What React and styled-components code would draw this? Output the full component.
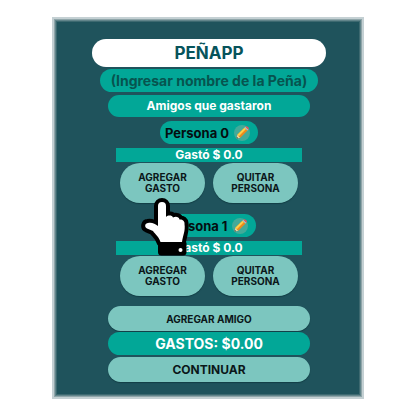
import React, { useState } from "react";
import styled, { createGlobalStyle } from "styled-components";

const GlobalStyle = createGlobalStyle`
  * { box-sizing: border-box; }
  body {
    margin: 0;
    background: #fff;
    font-family: Inter, "Liberation Sans", sans-serif;
    font-weight: 700;
  }
  button, input { font: inherit; }
`;

const Frame = styled.main`
  display: flex;
  flex-direction: column;
  margin: 17px 52px;
  padding: 18px 36px 14px 38px;
  background: #1f535c;
  border: 2px solid #c4d0d3;
  box-shadow: inset 0 0 0 1px #8fa5a9, inset 0 0 0 2px #62858b, inset 0 0 0 3px #3d6970;
`;

const Title = styled.h1`
  margin: 2px 0;
  border-radius: 14px;
  background: #fff;
  color: #07545b;
  font-size: 17px;
  line-height: 28px;
  text-align: center;
`;

const NameInput = styled.input`
  height: 23px;
  margin: 0 8px 3px;
  padding: 0 4px;
  min-width: 0;
  border: 0;
  border-radius: 12px;
  background: #02a797;
  color: #07484a;
  font-size: 14px;
  text-align: center;
  &::placeholder { color: #07544f; opacity: 1; }
`;

const Heading = styled.h2`
  margin: 0 16px 4px;
  border-radius: 12px;
  background: #02a797;
  color: #fff;
  font-size: 12px;
  line-height: 22px;
  text-align: center;
`;

const Person = styled.section`
  display: flex;
  flex-direction: column;
  margin: 0 24px 11px;
  &:last-of-type { margin-bottom: 10px; }
`;

const PersonName = styled.h3`
  display: flex;
  align-items: center;
  align-self: center;
  gap: 5px;
  height: 23px;
  margin: 0 0 4px;
  padding: 0 8px 0 5px;
  border-radius: 12px;
  background: #02a797;
  color: #050e10;
  font-size: 13px;
`;

const EditButton = styled.button`
  display: flex;
  align-items: center;
  justify-content: center;
  width: 16px;
  height: 16px;
  padding: 0;
  border: 0;
  border-radius: 50%;
  background: #43aa99;
  cursor: pointer;
`;

const Spent = styled.p`
  margin: 0 0 1px;
  background: #02a797;
  color: #fff;
  font-size: 12px;
  line-height: 14px;
  text-align: center;
`;

const Actions = styled.div`
  display: grid;
  grid-template-columns: 1fr 1fr;
  gap: 8px;
  padding: 0 4px;
`;

const Action = styled.div`
  position: relative;
  display: grid;
`;

const Pill = styled.button`
  padding: 0 12px;
  border: 0;
  border-radius: 20px;
  background: #7cc6bf;
  box-shadow: 0 1px 1px #123f46;
  color: #0b1719;
  cursor: pointer;
`;

const ActionButton = styled(Pill)`
  height: 40px;
  padding: 0 8px;
  font-size: 10px;
  line-height: 11px;
`;

const WideButton = styled(Pill)`
  height: 25px;
  margin: 0 16px 1px;
  font-size: ${(p) => (p.$large ? "12px" : "10px")};
`;

const Total = styled.output`
  margin: 0 16px 2px;
  border-radius: 12px;
  background: #02a797;
  color: #fff;
  font-size: 14px;
  line-height: 23px;
  text-align: center;
`;

const Pointer = styled.svg`
  position: absolute;
  z-index: 1;
  top: 35px;
  left: 21px;
  width: 48px;
  height: 58px;
  pointer-events: none;
`;

function Pencil() {
  return (
    <svg viewBox="0 0 12 12" width="13" height="13" aria-hidden="true">
      <path d="M0.5 11.5 1.2 8.1 4 10.8Z" fill="#f5d3a0" />
      <path d="M0.5 11.5 0.8 10 2 11.2Z" fill="#27363a" />
      <path d="M1.2 8.1 7.8 1.5 10.6 4.2 4 10.8Z" fill="#ee8a1c" />
      <path d="M1.2 8.1 7.8 1.5 9.2 2.8 2.6 9.5Z" fill="#ffd04a" />
      <path d="M7.8 1.500 8.600 .7 11.400 3.400 10.600 4.200Z" fill="#b9c4c6" />
      <path d="M8.600 .7Q9.700 -.3 11.100 1T11.400 3.400Z" fill="#e0565d" />
    </svg>
  );
}

function HandPointer() {
  return (
    <Pointer viewBox="0 0 48 58" aria-hidden="true">
      <path
        d="M17 8a4 4 0 0 1 8 0V19C27 17 31 17 32 19.5 35 18 38 19 38.5 21.5 41 21 44 23 43.5 26 44.5 33 42 37 41 44H19.500C18 39 14 36 12 33L6 30.500C3 29 4 25 7 25 11 24 14 26 17 28Z"
        fill="#fff"
        stroke="#000"
        strokeWidth="8"
        strokeLinejoin="round"
        paintOrder="stroke"
      />
      <path d="M17 44.500H45.500V54Q45.500 57.500 42 57.500H20.500Q17 57.500 17 54Z" fill="#000" />
      <circle cx="39.500" cy="52" r="2" fill="#fff" />
    </Pointer>
  );
}

function PersonCard({ name, spent, pointed }) {
  return (
    <Person>
      <PersonName>
        {name}
        <EditButton type="button" aria-label={`Editar ${name}`}>
          <Pencil />
        </EditButton>
      </PersonName>
      <Spent>Gastó $ {spent}</Spent>
      <Actions>
        <Action>
          <ActionButton type="button">AGREGAR GASTO</ActionButton>
          {pointed && <HandPointer />}
        </Action>
        <Action>
          <ActionButton type="button">QUITAR PERSONA</ActionButton>
        </Action>
      </Actions>
    </Person>
  );
}

const people = [
  { name: "Persona 0", spent: "0.0", pointed: true },
  { name: "Persona 1", spent: "0.0", pointed: false },
];

export default function App() {
  const [groupName, setGroupName] = useState("");
  return (
    <>
      <GlobalStyle />
      <Frame>
        <Title>PEÑAPP</Title>
        <NameInput
          aria-label="Nombre de la Peña"
          placeholder="(Ingresar nombre de la Peña)"
          value={groupName}
          onChange={(e) => setGroupName(e.target.value)}
        />
        <Heading>Amigos que gastaron</Heading>
        {people.map((p) => (
          <PersonCard key={p.name} {...p} />
        ))}
        <WideButton type="button">AGREGAR AMIGO</WideButton>
        <Total>GASTOS: $0.00</Total>
        <WideButton type="button" $large>CONTINUAR</WideButton>
      </Frame>
    </>
  );
}
